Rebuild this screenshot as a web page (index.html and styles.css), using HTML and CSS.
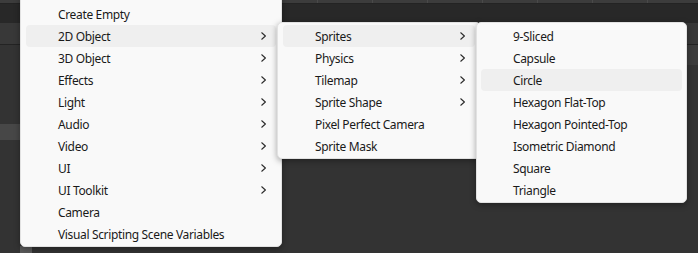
FILE: index.html
```html
<!DOCTYPE html>
<html lang="en">
<head>
    <meta charset="UTF-8">
    <meta name="viewport" content="width=device-width, initial-scale=1.0">
    <title>GameObject Menu</title>
    <link rel="stylesheet" href="styles.css">
</head>
<body>

    <div class="editor">
        <div class="tabs">
            <div class="tab" style="width: 317px;"></div>
            <div class="tab"></div>
            <div class="tab"></div>
            <div class="tab"></div>
            <div class="tab"></div>
            <div class="tab"></div>
            <div class="tab"></div>
        </div>
        <div class="toolbar"></div>
        <div class="panels">
            <div class="panel left">
                <div class="panel-header"></div>
                <div class="rows">
                    <div class="row spacer"></div>
                    <div class="row selected"></div>
                </div>
                <div class="footer-tab"></div>
            </div>
            <div class="panel right">
                <div class="panel-header"></div>
                <div class="rows">
                    <div class="row light"></div>
                </div>
            </div>
        </div>
    </div>

    <!-- main context menu -->
    <div class="menu menu-main">
        <div class="item"><span>Create Empty</span></div>
        <div class="item active"><span>2D Object</span><svg class="chevron" width="5" height="8" viewBox="0 0 5 8"><polyline points="0.5,0.5 4.4,4 0.5,7.5"/></svg></div>
        <div class="item"><span>3D Object</span><svg class="chevron" width="5" height="8" viewBox="0 0 5 8"><polyline points="0.5,0.5 4.4,4 0.5,7.5"/></svg></div>
        <div class="item"><span>Effects</span><svg class="chevron" width="5" height="8" viewBox="0 0 5 8"><polyline points="0.5,0.5 4.4,4 0.5,7.5"/></svg></div>
        <div class="item"><span>Light</span><svg class="chevron" width="5" height="8" viewBox="0 0 5 8"><polyline points="0.5,0.5 4.4,4 0.5,7.5"/></svg></div>
        <div class="item"><span>Audio</span><svg class="chevron" width="5" height="8" viewBox="0 0 5 8"><polyline points="0.5,0.5 4.4,4 0.5,7.5"/></svg></div>
        <div class="item"><span>Video</span><svg class="chevron" width="5" height="8" viewBox="0 0 5 8"><polyline points="0.5,0.5 4.4,4 0.5,7.5"/></svg></div>
        <div class="item"><span>UI</span><svg class="chevron" width="5" height="8" viewBox="0 0 5 8"><polyline points="0.5,0.5 4.4,4 0.5,7.5"/></svg></div>
        <div class="item"><span>UI Toolkit</span><svg class="chevron" width="5" height="8" viewBox="0 0 5 8"><polyline points="0.5,0.5 4.4,4 0.5,7.5"/></svg></div>
        <div class="item"><span>Camera</span></div>
        <div class="item"><span>Visual Scripting Scene Variables</span></div>
    </div>

    <!-- 2D Object submenu -->
    <div class="menu menu-2d">
        <div class="item active"><span>Sprites</span><svg class="chevron" width="5" height="8" viewBox="0 0 5 8"><polyline points="0.5,0.5 4.4,4 0.5,7.5"/></svg></div>
        <div class="item"><span>Physics</span><svg class="chevron" width="5" height="8" viewBox="0 0 5 8"><polyline points="0.5,0.5 4.4,4 0.5,7.5"/></svg></div>
        <div class="item"><span>Tilemap</span><svg class="chevron" width="5" height="8" viewBox="0 0 5 8"><polyline points="0.5,0.5 4.4,4 0.5,7.5"/></svg></div>
        <div class="item"><span>Sprite Shape</span><svg class="chevron" width="5" height="8" viewBox="0 0 5 8"><polyline points="0.5,0.5 4.4,4 0.5,7.5"/></svg></div>
        <div class="item"><span>Pixel Perfect Camera</span></div>
        <div class="item"><span>Sprite Mask</span></div>
    </div>

    <!-- Sprites submenu -->
    <div class="menu menu-sprites">
        <div class="item"><span>9-Sliced</span></div>
        <div class="item"><span>Capsule</span></div>
        <div class="item active"><span>Circle</span></div>
        <div class="item"><span>Hexagon Flat-Top</span></div>
        <div class="item"><span>Hexagon Pointed-Top</span></div>
        <div class="item"><span>Isometric Diamond</span></div>
        <div class="item"><span>Square</span></div>
        <div class="item"><span>Triangle</span></div>
    </div>

</body>
</html>
```

FILE: styles.css
```css
body {
    margin: 0;
    width: 698px;
    height: 253px;
    overflow: hidden;
    background-color: #333333;
    font-family: "Noto Sans", sans-serif;
    position: relative;
}
.editor {
    display: flex;
    flex-direction: column;
    height: 253px;
}
.tabs {
    display: flex;
    height: 3px;
    background-color: #3c3c3c;
    border-bottom: 1px solid #232323;
}
.tab {
    width: 54px;
    border-right: 1px solid #4a4a4a;
}
.toolbar {
    height: 19px;
    background-color: #282828;
}
.panels {
    flex: 1;
    display: flex;
}
.panel {
    display: flex;
    flex-direction: column;
}
.panel.left {
    width: 32px;
}
.panel.right {
    flex: 1;
}
.panel-header {
    height: 21px;
    background-color: #383838;
    border-bottom: 1px solid #232323;
}
.rows {
    flex: 1;
    display: flex;
    flex-direction: column;
}
.row {
    height: 16px;
}
.row.spacer {
    height: 79px;
}
.row.light {
    height: 20px;
    background-color: #3c3c3c;
}
.row.selected {
    background-color: #474747;
}
.footer-tab {
    height: 7px;
    width: 12px;
    margin-left: 20px;
    background-color: #5a5a5a;
}

.menu {
    position: absolute;
    background-color: #f9f9f9;
    border: 1px solid #e2e2e2;
    border-radius: 5px;
    box-shadow: 0px 2px 6px rgba(0, 0, 0, 0.35);
    padding: 2px 0 1px;
    box-sizing: border-box;
}
.menu-main {
    left: 20px;
    top: -6px;
    width: 262px;
    padding-top: 8px;
}
.menu-2d {
    left: 277px;
    top: 22px;
    width: 204px;
}
.menu-sprites {
    left: 476px;
    top: 22px;
    width: 211px;
}
.item {
    display: flex;
    align-items: center;
    justify-content: space-between;
    height: 22px;
    margin: 0 5px;
    padding: 0 10px 0 32px;
    border-radius: 4px;
    font-size: 12px;
    letter-spacing: -0.35px;
    color: #1a1a1a;
}
.menu-sprites .item {
    margin: 0 4px;
}
.item.active {
    background-color: #efefef;
}
.chevron {
    fill: none;
    stroke: #2a2a2a;
    stroke-width: 1.1;
}
```
